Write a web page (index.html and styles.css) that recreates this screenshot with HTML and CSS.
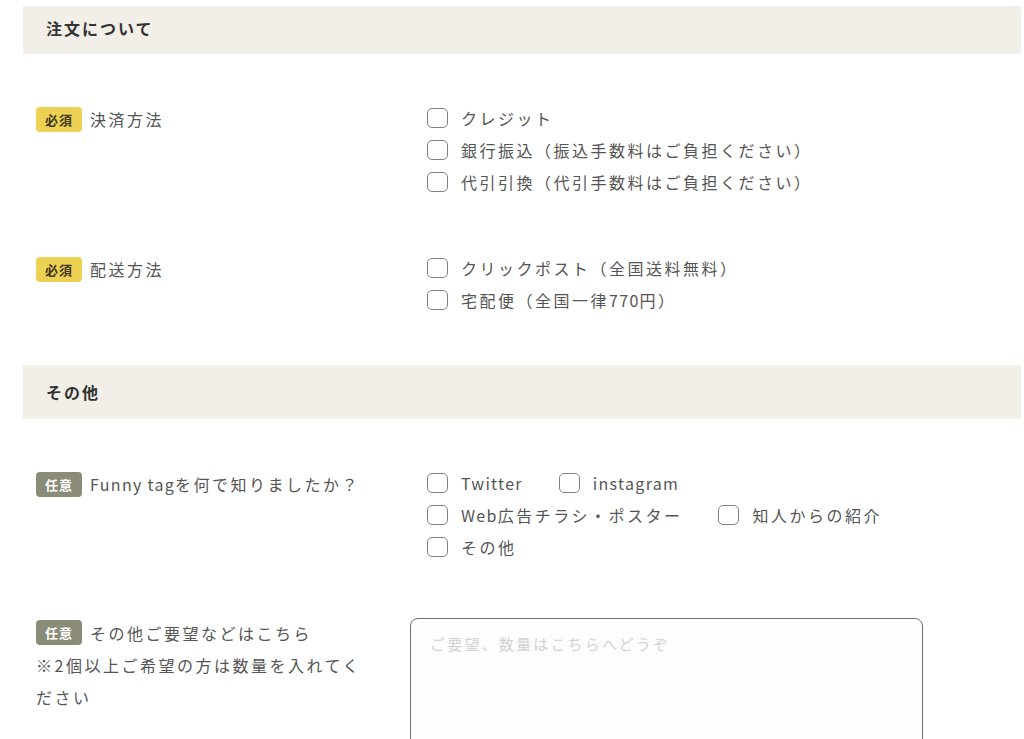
FILE: index.html
```html
<!DOCTYPE html>
<html lang="ja">
<head>
<meta charset="utf-8">
<title>注文フォーム</title>
<link rel="stylesheet" href="styles.css">
</head>
<body>
<div class="form">
  <h2 class="sec-head sec-head--first">注文について</h2>
  <div class="sec-body">
    <div class="row">
      <div class="label"><span class="badge badge--req">必須</span><span>決済方法</span></div>
      <div class="field options">
        <div class="opt-line"><label class="opt"><span class="box"></span><span>クレジット</span></label></div>
        <div class="opt-line"><label class="opt"><span class="box"></span><span>銀行振込（振込手数料はご負担ください）</span></label></div>
        <div class="opt-line"><label class="opt"><span class="box"></span><span>代引引換（代引手数料はご負担ください）</span></label></div>
      </div>
    </div>
    <div class="row">
      <div class="label"><span class="badge badge--req">必須</span><span>配送方法</span></div>
      <div class="field options">
        <div class="opt-line"><label class="opt"><span class="box"></span><span>クリックポスト（全国送料無料）</span></label></div>
        <div class="opt-line"><label class="opt"><span class="box"></span><span>宅配便（全国一律<span class="en">770</span>円）</span></label></div>
      </div>
    </div>
  </div>

  <h2 class="sec-head">その他</h2>
  <div class="sec-body">
    <div class="row">
      <div class="label"><span class="badge badge--opt">任意</span><span><span class="en">Funny tag</span>を何で知りましたか？</span></div>
      <div class="field options">
        <div class="opt-line"><label class="opt"><span class="box"></span><span class="en">Twitter</span></label><label class="opt"><span class="box"></span><span class="en">instagram</span></label></div>
        <div class="opt-line"><label class="opt"><span class="box"></span><span><span class="en">Web</span>広告チラシ・ポスター</span></label><label class="opt"><span class="box"></span><span>知人からの紹介</span></label></div>
        <div class="opt-line"><label class="opt"><span class="box"></span><span>その他</span></label></div>
      </div>
    </div>
    <div class="row">
      <div class="label label--block"><span class="badge badge--opt">任意</span><span>その他ご要望などはこちら</span><br><span>※2個以上ご希望の方は数量を入れてください</span></div>
      <div class="field">
        <textarea class="textarea" placeholder="ご要望、数量はこちらへどうぞ"></textarea>
      </div>
    </div>
  </div>
</div>
</body>
</html>
```

FILE: styles.css
```css
html, body {
  margin: 0;
  padding: 0;
  background: #ffffff;
}
body {
  font-family: "Noto Sans CJK JP", "Noto Sans", sans-serif;
  color: #555555;
  font-size: 16px;
  letter-spacing: 2.5px;
  overflow: hidden;
}
.en {
  letter-spacing: 1.3px;
}
.form {
  margin: 0 3px 0 23px;
}
.sec-head {
  margin: 0;
  background: #f2efe9;
  color: #333333;
  font-size: 16px;
  font-weight: 700;
  line-height: 28px;
  padding: 13px 23px;
  letter-spacing: 2px;
}
.sec-head--first {
  margin-top: 6px;
  padding-top: 8px;
  padding-bottom: 12px;
}
.sec-body {
  padding: 21px 0 22px;
}
.row {
  display: grid;
  grid-template-columns: 335px 1fr;
  column-gap: 39px;
  padding: 27px 0 27px 13px;
}
.label {
  display: flex;
  align-items: center;
  gap: 8px;
  line-height: 32px;
  height: 32px;
  padding-top: 1px;
  align-self: start;
}
.label--block {
  display: block;
  height: auto;
  padding-top: 0;
}
.label--block .badge {
  margin-right: 8px;
}
.badge {
  display: inline-flex;
  align-items: center;
  justify-content: center;
  width: 46px;
  height: 25px;
  border-radius: 4px;
  font-size: 13px;
  font-weight: 700;
  letter-spacing: 1px;
  line-height: 1;
  flex: none;
  vertical-align: 2px;
}
.badge--req {
  background: #ecd152;
  color: #3f3820;
}
.badge--opt {
  background: #8b8c77;
  color: #ffffff;
}
.options {
  padding-left: 17px;
}
.opt-line {
  display: flex;
  gap: 36px;
  line-height: 32px;
  height: 32px;
}
.opt {
  display: inline-flex;
  align-items: center;
  gap: 13px;
  white-space: nowrap;
}
.box {
  width: 19px;
  height: 18px;
  border: 1px solid #808080;
  border-radius: 5px;
  background: #ffffff;
  flex: none;
}
.textarea {
  display: block;
  box-sizing: border-box;
  width: 513px;
  height: 200px;
  margin-top: 1px;
  border: 1px solid #707070;
  border-radius: 8px;
  padding: 12px 19px;
  font-family: "Noto Sans CJK JP", "Noto Sans", sans-serif;
  font-size: 15px;
  letter-spacing: 2.2px;
  line-height: 26px;
  color: #555555;
  background: #fdfdfd;
  resize: none;
  outline: none;
}
.textarea::placeholder {
  color: #d2d2d2;
}
```
